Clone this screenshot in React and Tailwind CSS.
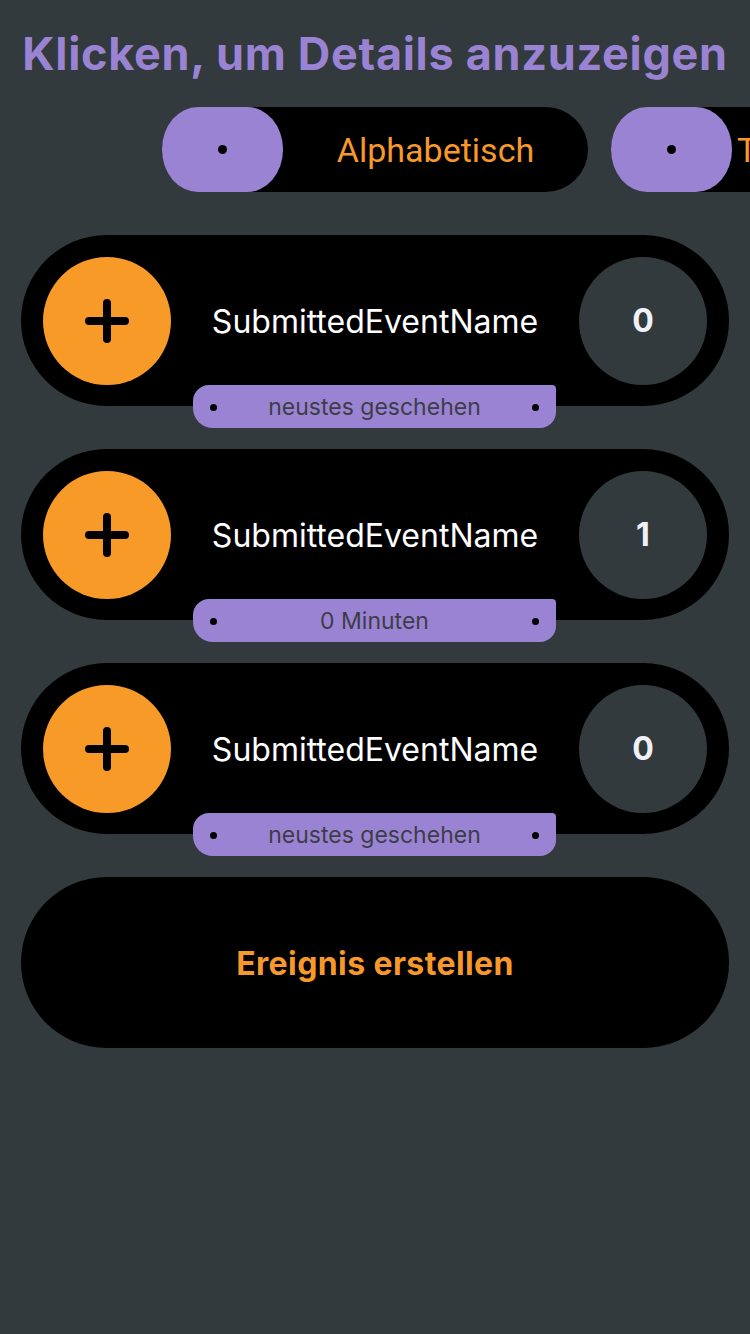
const events = [
  { name: 'SubmittedEventName', count: 0, last: 'neustes geschehen' },
  { name: 'SubmittedEventName', count: 1, last: '0 Minuten' },
  { name: 'SubmittedEventName', count: 0, last: 'neustes geschehen' },
]

const sorts = [
  { label: 'Alphabetisch', center: true },
  { label: 'Timestamp', center: false },
]

export default function App() {
  return (
    <div className="min-h-[1334px] w-[750px] overflow-hidden bg-[#323a3d] font-['Inter',sans-serif]">
      <h1 className="pt-[26px] text-center text-[45px] leading-[56px] font-bold tracking-[0.7px] whitespace-nowrap text-[#9a83d3]">
        Klicken, um Details anzuzeigen
      </h1>

      {/* Sortierung */}
      <div className="mt-[25px] flex gap-[23px] overflow-hidden pl-[162px]">
        {sorts.map((s) => (
          <SortPill key={s.label} {...s} />
        ))}
      </div>

      <div className="mt-[43px] flex flex-col gap-[21px] px-[21px]">
        {events.map((e, i) => (
          <EventCard key={i} {...e} />
        ))}

        <button className="flex h-[171px] w-full items-center justify-center rounded-full bg-black pt-[2px] text-[32px] font-bold tracking-[0.4px] text-[#f7992a]">
          Ereignis erstellen
        </button>
      </div>
    </div>
  )
}

function SortPill({ label, center }) {
  return (
    <div className="flex h-[85px] w-[426px] shrink-0 items-center rounded-full bg-black">
      <div className="flex h-[85px] w-[121px] shrink-0 items-center justify-center rounded-[36px_/_42px] bg-[#9a83d3]">
        <span className="h-[9px] w-[9px] rounded-full bg-black" />
      </div>
      <div
        className={`flex-1 whitespace-nowrap pt-[2px] font-['Roboto',sans-serif] text-[34px] text-[#f7992a] ${
          center ? 'text-center' : 'pl-[5px] text-left'
        }`}
      >
        {label}
      </div>
    </div>
  )
}

function EventCard({ name, count, last }) {
  return (
    <div className="relative pb-[22px]">
      <div className="flex h-[171px] items-center rounded-full bg-black px-[22px]">
        <div className="flex h-[128px] w-[128px] shrink-0 items-center justify-center rounded-full bg-[#f79a28]">
          <svg width="44" height="44" viewBox="0 0 44 44" fill="none" stroke="#000" strokeWidth="8" strokeLinecap="round">
            <path d="M4 22h36M22 4v36" />
          </svg>
        </div>
        <div className="flex-1 pt-[2px] text-center text-[32px] text-white">{name}</div>
        <div className="flex h-[128px] w-[128px] shrink-0 items-center justify-center rounded-full bg-[#323a3d] text-[32px] font-bold text-[#f0f0f8]">
          {count}
        </div>
      </div>
      <div className="absolute bottom-0 left-[172px] flex h-[43px] w-[363px] items-center justify-between rounded-tl-[16px] rounded-bl-[20px] rounded-tr-[4px] rounded-br-[16px] bg-[#9a83d3] px-[17px] pt-[2px]">
        <span className="h-[7px] w-[7px] rounded-full bg-black" />
        <span className="text-[23px] text-[#3d3d48]">{last}</span>
        <span className="h-[7px] w-[7px] rounded-full bg-black" />
      </div>
    </div>
  )
}
